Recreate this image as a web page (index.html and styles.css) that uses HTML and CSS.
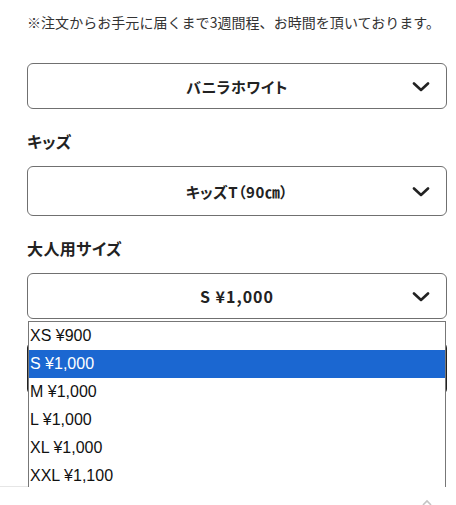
FILE: index.html
```html
<!DOCTYPE html>
<html lang="ja">
<head>
    <meta charset="UTF-8">
    <meta name="viewport" content="width=device-width, initial-scale=1.0">
    <title>商品オプション</title>
    <link rel="stylesheet" href="styles.css">
</head>
<body>
    <div class="product-options">
        <p class="notice">※注文からお手元に届くまで3週間程、お時間を頂いております。</p>

        <!-- Color -->
        <div class="select-box">
            <span class="select-value">バニラホワイト</span>
            <svg class="chevron" width="18" height="10" viewBox="0 0 18 10"><path d="M2 1.5 L9 8 L16 1.5" fill="none" stroke="#222" stroke-width="2.6" stroke-linecap="round" stroke-linejoin="round"/></svg>
        </div>

        <!-- Kids -->
        <h3 class="option-label">キッズ</h3>
        <div class="select-box select-box--tall">
            <span class="select-value">キッズT（90㎝）</span>
            <svg class="chevron" width="18" height="10" viewBox="0 0 18 10"><path d="M2 1.5 L9 8 L16 1.5" fill="none" stroke="#222" stroke-width="2.6" stroke-linecap="round" stroke-linejoin="round"/></svg>
        </div>

        <!-- Adult size -->
        <h3 class="option-label">大人用サイズ</h3>
        <div class="select-wrap">
            <div class="select-box">
                <span class="select-value select-value--latin">S ¥1,000</span>
                <svg class="chevron" width="18" height="10" viewBox="0 0 18 10"><path d="M2 1.5 L9 8 L16 1.5" fill="none" stroke="#222" stroke-width="2.6" stroke-linecap="round" stroke-linejoin="round"/></svg>
            </div>

            <!-- Open dropdown list -->
            <ul class="dropdown">
                <li>XS ¥900</li>
                <li class="selected">S ¥1,000</li>
                <li>M ¥1,000</li>
                <li>L ¥1,000</li>
                <li>XL ¥1,000</li>
                <li>XXL ¥1,100</li>
            </ul>
        </div>

        <button class="cart-btn">カートに入れる</button>
    </div>

    <hr class="divider">
    <svg class="to-top" width="12" height="8" viewBox="0 0 12 8"><path d="M2 7 L6 3 L10 7" fill="none" stroke="#c4c4c4" stroke-width="1.6"/></svg>
</body>
</html>
```

FILE: styles.css
```css
/* General Page Styling */
body {
    margin: 0;
    font-family: "Noto Sans CJK JP", "Noto Sans", sans-serif;
    color: #222;
    background: #fff;
}

.product-options {
    position: relative;
    z-index: 1;
    padding: 12px 9px 0 27px;
}

.notice {
    margin: 0;
    font-size: 14px;
    line-height: 20px;
    letter-spacing: 0.05px;
    color: #333;
}

/* Select boxes */
.select-box {
    position: relative;
    display: flex;
    align-items: center;
    justify-content: center;
    height: 46px;
    border: 1px solid #707070;
    border-radius: 6px;
    box-sizing: border-box;
    margin-top: 31px;
    background: #fff;
}

.select-box--tall {
    height: 50px;
    margin-top: 14px;
}

.select-value {
    font-size: 15px;
    font-weight: bold;
    font-feature-settings: "palt";
    letter-spacing: 0.5px;
}

.select-value--latin {
    font-size: 16px;
    letter-spacing: 1px;
}

.chevron {
    position: absolute;
    right: 16px;
    top: 50%;
    margin-top: -4px;
}

.option-label {
    margin: 21px 0 0;
    font-size: 16px;
    line-height: 22px;
    font-weight: bold;
    font-feature-settings: "palt";
    letter-spacing: 0.4px;
}

.select-wrap {
    position: relative;
    margin-top: 14px;
}

.select-wrap .select-box {
    margin-top: 0;
}

/* Dropdown list (open state) */
.dropdown {
    position: absolute;
    top: 48px;
    left: 1px;
    right: 1px;
    z-index: 2;
    margin: 0;
    padding: 0;
    list-style: none;
    background: #fff;
    border: 1px solid #777;
    font-family: "Liberation Sans", Arial, sans-serif;
    font-size: 16px;
    color: #111;
}

.dropdown li {
    height: 28px;
    line-height: 28px;
    padding-left: 1px;
}

.dropdown li.selected {
    background: #1b67d1;
    color: #fff;
}

/* Button behind the list */
.cart-btn {
    display: block;
    width: 100%;
    height: 53px;
    margin-top: 23px;
    border: 2px solid #222;
    border-radius: 6px;
    background: #fff;
    font-family: inherit;
    font-size: 16px;
}

.divider {
    width: 40px;
    margin: 91px 0 0;
    border: none;
    border-top: 1px solid #e6e6e6;
}

.to-top {
    position: absolute;
    left: 421px;
    top: 498px;
}
```
